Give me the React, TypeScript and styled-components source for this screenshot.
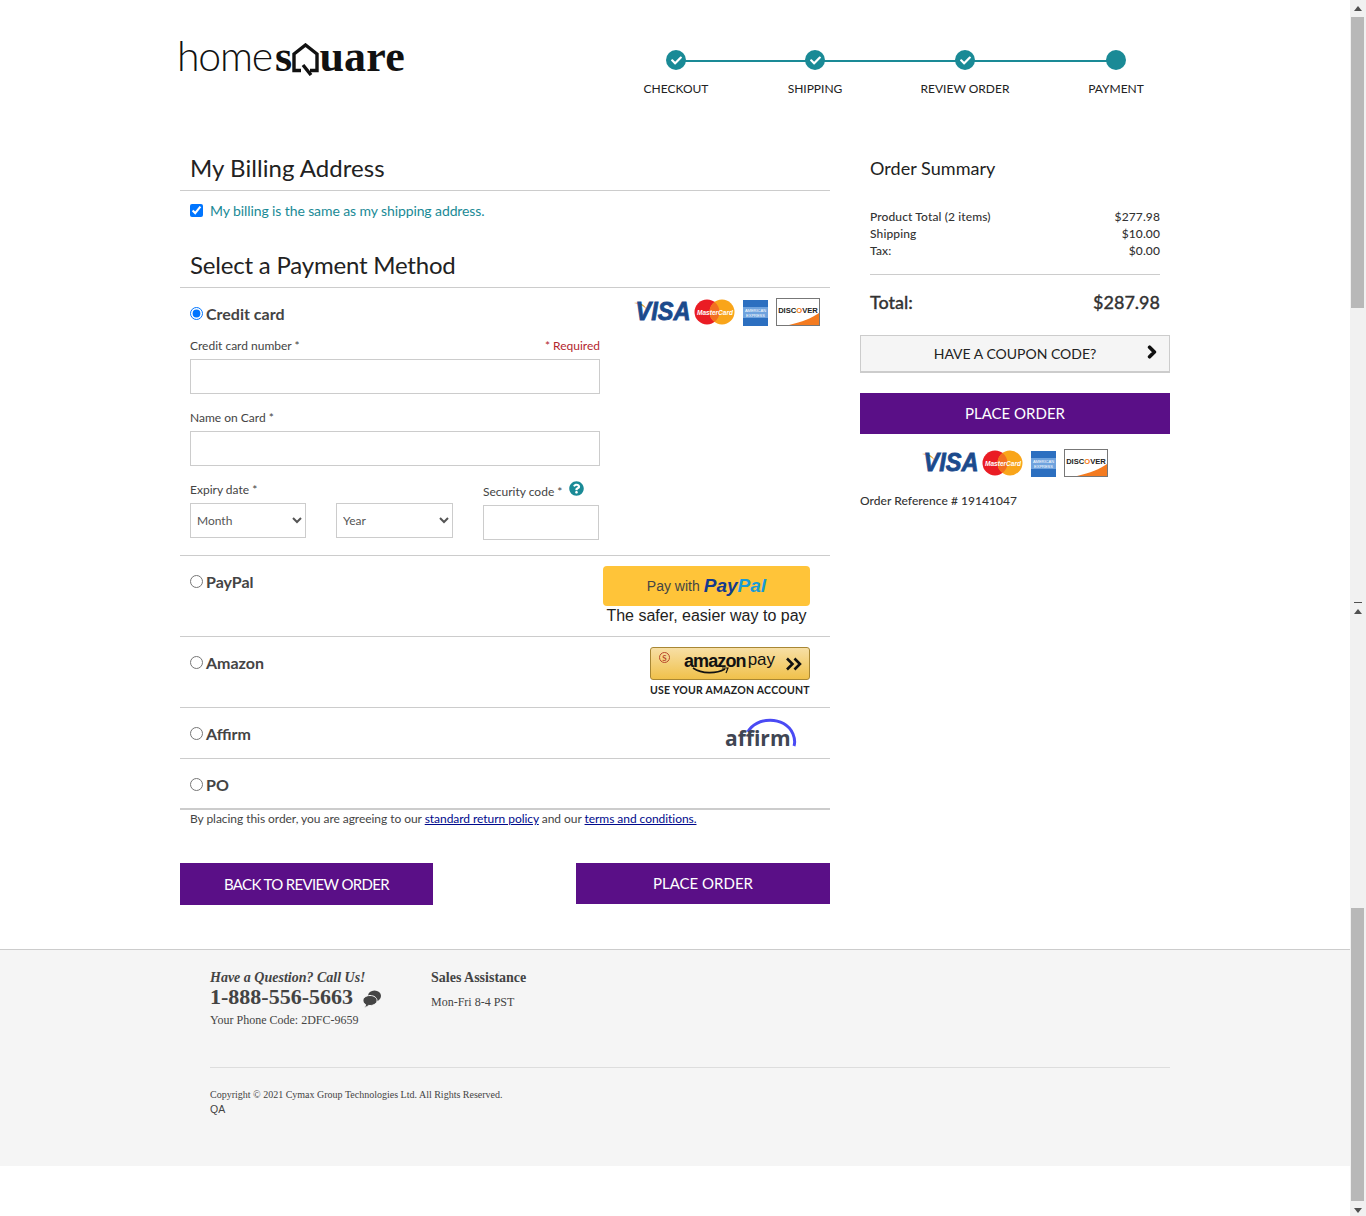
import * as React from "react";
import styled, {createGlobalStyle} from "styled-components";
import {FaCheck, FaChevronRight, FaQuestionCircle} from "react-icons/fa";

const GlobalStyle = createGlobalStyle`
    html, body {
        margin: 0;
        height: 1216px;
        overflow: hidden;
        background: #fff;
    }
    body {
        font-family: Lato, "Liberation Sans", sans-serif;
        color: #333;
    }
    * {
        box-sizing: border-box;
    }
`;

const STEPS = [
    {label: "CHECKOUT", gap: 0, done: true},
    {label: "SHIPPING", gap: 39, done: true},
    {label: "REVIEW ORDER", gap: 50, done: true},
    {label: "PAYMENT", gap: 51, done: false},
];

const CardLogos = () => (
    <svg width="186" height="30" viewBox="0 0 186 30" aria-label="Accepted cards">
        <path d="M0 5 C4 4 10 5 13 12 C11 9 6 6 0 5Z" fill="#e8a33a" />
        <text x="1.5" y="22" fontFamily="Liberation Sans" fontWeight="700" fontStyle="italic" fontSize="25" fill="#1b4a8c" stroke="#1b4a8c" strokeWidth="0.8" textLength="55" lengthAdjust="spacingAndGlyphs">VISA</text>
        <circle cx="73" cy="14" r="12.5" fill="#ea1c24" />
        <circle cx="88" cy="14" r="12.5" fill="#f9a51a" />
        <path d="M80.5 4 a12.5 12.5 0 0 1 0 20 a12.5 12.5 0 0 1 0 -20Z" fill="#f26f21" />
        <text x="63" y="16.5" fontFamily="Liberation Sans" fontWeight="700" fontStyle="italic" fontSize="7.5" fill="#fff" textLength="36" lengthAdjust="spacingAndGlyphs">MasterCard</text>
        <rect x="109" y="2" width="25" height="26" fill="#2c6fc0" />
        <rect x="109" y="9" width="25" height="11" fill="#6fa3de" />
        <text x="121.5" y="13.5" textAnchor="middle" fontFamily="Liberation Sans" fontSize="4" fill="#fff">AMERICAN</text>
        <text x="121.5" y="19" textAnchor="middle" fontFamily="Liberation Sans" fontSize="4" fill="#fff">EXPRESS</text>
        <rect x="142.5" y="0.5" width="43" height="27" fill="#fff" stroke="#777" />
        <path d="M155 27 C168 24 178 20 185 15 V27Z" fill="#f47b20" />
        <text x="164" y="15" textAnchor="middle" fontFamily="Liberation Sans" fontWeight="700" fontSize="7.6" fill="#222">DISC<tspan fill="#f47b20">O</tspan>VER</text>
    </svg>
);

const AffirmLogo = () => (
    <AffirmWrap>
        <AffirmArc width="52" height="30" viewBox="0 0 52 30">
            <path d="M3 14 C10 -1 40 -3 48 16 C50 21 50 25 49 28" fill="none" stroke="#4a4af4" strokeWidth="3" />
        </AffirmArc>
        <AffirmText>affirm</AffirmText>
    </AffirmWrap>
);

const ChatIcon = () => (
    <ChatSvg width="18" height="18" viewBox="0 0 18 18">
        <ellipse cx="11.5" cy="6" rx="6.5" ry="5.5" fill="#444" />
        <path d="M7 5.5 C3 5.5 0 7.7 0 10.5 C0 12.2 1 13.6 2.6 14.5 C2.5 15.6 2 16.5 1.4 17.3 C3 17.2 4.5 16.5 5.5 15.4 C6 15.5 6.5 15.5 7 15.5 C11 15.5 14 13.3 14 10.5 C14 7.7 11 5.5 7 5.5Z" fill="#444" stroke="#f5f5f5" strokeWidth="1" />
    </ChatSvg>
);

const ScrollArrow = ({down}: {down?: boolean}) => (
    <ArrowBox>
        <svg width="8" height="5" viewBox="0 0 8 5">
            <path d={down ? "M0 0H8L4 5Z" : "M0 5H8L4 0Z"} fill="#505050" />
        </svg>
    </ArrowBox>
);

export default function App() {
    return (
        <Shell>
            <GlobalStyle />
            <Page>
                <Wrap>
                    <Header>
                        <Logo>
                            <LogoThin>home</LogoThin>
                            <LogoBold>s</LogoBold>
                            <LogoHouse width="27" height="33" viewBox="0 0 27 33">
                                <path d="M9 27.5 H2 V11 L13.5 2 L25 11 V27.5 H18 M11 22 L19 32" fill="none" stroke="#111" strokeWidth="3.4" />
                            </LogoHouse>
                            <LogoBold>uare</LogoBold>
                        </Logo>
                        <Stepper>
                            <StepTrack />
                            {STEPS.map((step) => (
                                <Step key={step.label} $gap={step.gap}>
                                    <StepDot>{step.done && <FaCheck size={11} />}</StepDot>
                                    <StepLabel>{step.label}</StepLabel>
                                </Step>
                            ))}
                        </Stepper>
                    </Header>
                    <Columns>
                        <Main>
                            <SectionTitle>My Billing Address</SectionTitle>
                            <SameRow>
                                <Check type="checkbox" defaultChecked />
                                My billing is the same as my shipping address.
                            </SameRow>
                            <SectionTitle $second>Select a Payment Method</SectionTitle>
                            <CardRow>
                                <CardHead>
                                    <MethodLabel $top={-1}>
                                        <Radio type="radio" name="method" defaultChecked />
                                        Credit card
                                    </MethodLabel>
                                    <CardLogosSlot>
                                        <CardLogos />
                                    </CardLogosSlot>
                                </CardHead>
                                <FormColumn>
                                    <LabelRow>
                                        <FieldLabel>Credit card number *</FieldLabel>
                                        <Required>* Required</Required>
                                    </LabelRow>
                                    <TextField type="text" />
                                    <LabelRow $top={15}>
                                        <FieldLabel>Name on Card *</FieldLabel>
                                    </LabelRow>
                                    <TextField type="text" />
                                    <ExpiryRow>
                                        <ExpiryCol>
                                            <LabelRow>
                                                <FieldLabel>Expiry date *</FieldLabel>
                                            </LabelRow>
                                            <SelectPair>
                                                <DateSelect defaultValue="Month">
                                                    <option>Month</option>
                                                </DateSelect>
                                                <DateSelect defaultValue="Year">
                                                    <option>Year</option>
                                                </DateSelect>
                                            </SelectPair>
                                        </ExpiryCol>
                                        <SecurityCol>
                                            <SecurityLabel>
                                                <FieldLabel>Security code *</FieldLabel>
                                                <HelpIcon />
                                            </SecurityLabel>
                                            <TextField type="text" />
                                        </SecurityCol>
                                    </ExpiryRow>
                                </FormColumn>
                            </CardRow>
                            <MethodRow $height={81}>
                                <MethodLabel $top={9}>
                                    <Radio type="radio" name="method" />
                                    PayPal
                                </MethodLabel>
                                <PayPalBox>
                                    <PayPalButton>
                                        Pay with <PayPalMark>Pay<PayPalAccent>Pal</PayPalAccent></PayPalMark>
                                    </PayPalButton>
                                    <PayPalNote>The safer, easier way to pay</PayPalNote>
                                </PayPalBox>
                            </MethodRow>
                            <MethodRow $height={71}>
                                <MethodLabel $top={9}>
                                    <Radio type="radio" name="method" />
                                    Amazon
                                </MethodLabel>
                                <AmazonBox>
                                    <AmazonButton>
                                        <AmazonSeal>S</AmazonSeal>
                                        <AmazonWord>
                                            <strong>amazon</strong>
                                            <AmazonSmile width="38" height="7" viewBox="0 0 38 7">
                                                <path d="M1 1 C10 7 24 7 33 2" fill="none" stroke="#111" strokeWidth="1.6" />
                                                <path d="M30 1 H36 L34 6" fill="none" stroke="#111" strokeWidth="1.2" />
                                            </AmazonSmile>
                                        </AmazonWord>
                                        <AmazonPay>pay</AmazonPay>
                                        <svg width="16" height="14" viewBox="0 0 16 14">
                                            <path d="M1 1.5 L6.5 7 L1 12.5 M8.5 1.5 L14 7 L8.5 12.5" fill="none" stroke="#111" strokeWidth="2.6" />
                                        </svg>
                                    </AmazonButton>
                                    <AmazonNote>USE YOUR AMAZON ACCOUNT</AmazonNote>
                                </AmazonBox>
                            </MethodRow>
                            <MethodRow $height={51}>
                                <MethodLabel $top={9}>
                                    <Radio type="radio" name="method" />
                                    Affirm
                                </MethodLabel>
                                <AffirmLogo />
                            </MethodRow>
                            <MethodRow $height={50}>
                                <MethodLabel $top={9}>
                                    <Radio type="radio" name="method" />
                                    PO
                                </MethodLabel>
                            </MethodRow>
                            <Terms>
                                By placing this order, you are agreeing to our <TermsLink href="#return">standard return policy</TermsLink> and our <TermsLink href="#terms">terms and conditions.</TermsLink>
                            </Terms>
                            <ActionRow>
                                <PurpleButton $width={253} $height={42} $spacing={-0.65}>BACK TO REVIEW ORDER</PurpleButton>
                                <PurpleButton $width={254} $height={41}>PLACE ORDER</PurpleButton>
                            </ActionRow>
                        </Main>
                        <Side>
                            <SummaryTitle>Order Summary</SummaryTitle>
                            <SummaryLines>
                                <SummaryLine><span>Product Total (2 items)</span><span>$277.98</span></SummaryLine>
                                <SummaryLine><span>Shipping</span><span>$10.00</span></SummaryLine>
                                <SummaryLine><span>Tax:</span><span>$0.00</span></SummaryLine>
                            </SummaryLines>
                            <TotalRow><span>Total:</span><span>$287.98</span></TotalRow>
                            <CouponBox>
                                HAVE A COUPON CODE?
                                <CouponArrow><FaChevronRight size={14} stroke="currentColor" strokeWidth={50} /></CouponArrow>
                            </CouponBox>
                            <PurpleButton $height={41}>PLACE ORDER</PurpleButton>
                            <SideLogos>
                                <CardLogos />
                            </SideLogos>
                            <OrderRef>Order Reference # 19141047</OrderRef>
                        </Side>
                    </Columns>
                </Wrap>
                <Footer>
                    <FooterInner>
                        <FooterTop>
                            <CallBlock>
                                <CallLead>Have a Question? Call Us!</CallLead>
                                <PhoneLine>
                                    1-888-556-5663
                                    <ChatIcon />
                                </PhoneLine>
                                <PhoneCode>Your Phone Code: 2DFC-9659</PhoneCode>
                            </CallBlock>
                            <SalesBlock>
                                <SalesTitle>Sales Assistance</SalesTitle>
                                <SalesHours>Mon-Fri 8-4 PST</SalesHours>
                            </SalesBlock>
                        </FooterTop>
                        <Copyright>Copyright © 2021 Cymax Group Technologies Ltd. All Rights Reserved.</Copyright>
                        <Env>QA</Env>
                    </FooterInner>
                </Footer>
            </Page>
            <ScrollBar>
                <ScrollArrow />
                <Thumb $height={291} />
                <ScrollSpacer $height={294} />
                <ScrollMinus />
                <ScrollArrow />
                <ScrollSpacer $height={288} />
                <Thumb $height={293} />
                <ScrollSpacer $height={1} />
                <ScrollArrow down />
            </ScrollBar>
        </Shell>
    );
}

const Shell = styled.div`
    display: flex;
    width: 1366px;
    height: 1216px;
    overflow: hidden;
`;

const Page = styled.div`
    width: 1350px;
    flex: none;
`;

const Wrap = styled.div`
    width: 990px;
    height: 949px;
    margin-left: 180px;
`;

const Header = styled.header`
    display: flex;
    height: 155px;
`;

const Logo = styled.div`
    display: flex;
    align-items: baseline;
    width: 446px;
    height: 80px;
    padding-top: 31px;
    color: #111;
`;

const LogoThin = styled.span`
    font-family: Lato, sans-serif;
    font-weight: 300;
    font-size: 41px;
    line-height: 50px;
    letter-spacing: -1.2px;
    margin: 0 3px 0 -3px;
`;

const LogoBold = styled.span`
    font-family: "Liberation Serif", serif;
    font-weight: 700;
    font-size: 44px;
    line-height: 50px;
    letter-spacing: 0.25px;
`;

const LogoHouse = styled.svg`
    align-self: flex-start;
    margin-top: 12px;
    flex: none;
`;

const Stepper = styled.div`
    position: relative;
    display: flex;
    align-items: flex-start;
    height: 100px;
    padding-top: 50px;
`;

const StepTrack = styled.div`
    position: absolute;
    left: 50px;
    top: 60px;
    width: 440px;
    height: 2px;
    background: #1a8a96;
`;

const Step = styled.div<{$gap: number}>`
    position: relative;
    display: flex;
    flex-direction: column;
    align-items: center;
    width: 100px;
    margin-left: ${(p) => p.$gap}px;
`;

const StepDot = styled.div`
    display: flex;
    align-items: center;
    justify-content: center;
    width: 20px;
    height: 20px;
    border-radius: 50%;
    background: #1a8a96;
    color: #fff;
`;

const StepLabel = styled.div`
    margin-top: 12px;
    font-size: 12px;
    line-height: 14px;
    color: #222;
    white-space: nowrap;
`;

const Columns = styled.div`
    display: flex;
    gap: 30px;
`;

const Main = styled.main`
    width: 650px;
`;

const SectionTitle = styled.h2<{$second?: boolean}>`
    margin: ${(p) => (p.$second ? "21px" : "0")} 0 0;
    height: 36px;
    padding: 0 10px;
    border-bottom: 1px solid #ccc;
    font-size: 24px;
    font-weight: 400;
    line-height: 25px;
    letter-spacing: ${(p) => (p.$second ? "-0.2px" : "0.05px")};
    color: #222;
`;

const SameRow = styled.label`
    display: flex;
    align-items: center;
    height: 40px;
    padding: 0 10px 1px;
    font-size: 14px;
    letter-spacing: -0.1px;
    color: #1a8a96;
`;

const Check = styled.input`
    margin: 0 7px 0 0;
    width: 13px;
    height: 13px;
`;

const CardRow = styled.section`
    height: 268px;
    border-bottom: 1px solid #ccc;
    padding: 0 10px;
`;

const CardHead = styled.div`
    display: flex;
    justify-content: space-between;
    height: 49px;
    padding-top: 10px;
`;

const CardLogosSlot = styled.div`
    height: 30px;
`;

const MethodLabel = styled.label<{$top?: number}>`
    display: flex;
    align-items: center;
    height: 32px;
    margin-top: ${(p) => p.$top ?? 0}px;
    font-size: 16px;
    font-weight: 700;
    color: #444;
`;

const Radio = styled.input`
    margin: 0 3px 0 0;
    width: 13px;
    height: 13px;
`;

const FormColumn = styled.div`
    width: 410px;
`;

const LabelRow = styled.div<{$top?: number}>`
    display: flex;
    justify-content: space-between;
    align-items: center;
    height: 17px;
    margin-top: ${(p) => p.$top ?? 0}px;
    margin-bottom: 5px;
`;

const FieldLabel = styled.span`
    font-size: 12px;
    color: #444;
    white-space: nowrap;
`;

const Required = styled.span`
    font-size: 12px;
    color: #b3262e;
`;

const TextField = styled.input`
    display: block;
    width: 100%;
    height: 35px;
    border: 1px solid #ccc;
    background: #fff;
    padding: 0 6px;
    outline: none;
`;

const ExpiryRow = styled.div`
    display: flex;
    gap: 30px;
    margin-top: 15px;
`;

const ExpiryCol = styled.div`
    width: 263px;
`;

const SelectPair = styled.div`
    display: grid;
    grid-template-columns: 116px 117px;
    gap: 30px;
`;

const DateSelect = styled.select`
    width: 100%;
    height: 35px;
    border: 1px solid #ccc;
    border-radius: 0;
    background: #fff;
    padding: 0 2px;
    font-family: Lato, sans-serif;
    font-size: 12px;
    color: #555;
`;

const SecurityCol = styled.div`
    width: 116px;
    margin-top: -3px;
`;

const SecurityLabel = styled.div`
    display: flex;
    align-items: center;
    gap: 7px;
    height: 23px;
    padding-top: 4px;
    margin-bottom: 4px;
`;

const HelpIcon = styled(FaQuestionCircle)`
    width: 15px;
    height: 15px;
    flex: none;
    color: #1a8a96;
    margin-top: -7px;
`;

const MethodRow = styled.section<{$height: number}>`
    display: flex;
    justify-content: space-between;
    align-items: flex-start;
    height: ${(p) => p.$height}px;
    padding: 0 20px 0 10px;
    border-bottom: 1px solid #ccc;
`;

const PayPalBox = styled.div`
    width: 207px;
    padding-top: 10px;
`;

const PayPalButton = styled.div`
    display: flex;
    align-items: center;
    justify-content: center;
    gap: 4px;
    height: 40px;
    border-radius: 4px;
    background: #ffc439;
    font-family: "Liberation Sans", sans-serif;
    font-size: 14px;
    color: #444;
`;

const PayPalMark = styled.span`
    font-family: "Liberation Sans", sans-serif;
    font-weight: 700;
    font-style: italic;
    font-size: 19px;
    color: #143a8c;
`;

const PayPalAccent = styled.span`
    color: #179bd7;
`;

const PayPalNote = styled.div`
    font-family: "Liberation Sans", sans-serif;
    font-size: 16px;
    line-height: 20px;
    text-align: center;
    color: #222;
`;

const AmazonBox = styled.div`
    width: 160px;
    padding-top: 10px;
`;

const AmazonButton = styled.div`
    position: relative;
    display: flex;
    align-items: center;
    height: 33px;
    padding: 0 7px 0 33px;
    border: 1px solid #a88734;
    border-radius: 3px;
    background: linear-gradient(#f7dfa5, #f0c14b);
    color: #111;
`;

const AmazonSeal = styled.span`
    position: absolute;
    left: 8px;
    top: 4px;
    display: flex;
    align-items: center;
    justify-content: center;
    width: 11px;
    height: 11px;
    border: 1px solid #b8492c;
    border-radius: 50%;
    font-size: 8px;
    font-weight: 700;
    color: #b8492c;
`;

const AmazonWord = styled.span`
    position: relative;
    font-family: "Liberation Sans", sans-serif;
    font-size: 18px;
    line-height: 18px;
    letter-spacing: -0.9px;
    margin-top: -6px;
`;

const AmazonSmile = styled.svg`
    position: absolute;
    left: 8px;
    top: 15px;
`;

const AmazonPay = styled.span`
    font-family: "Liberation Sans", sans-serif;
    font-size: 17px;
    margin: -7px 11px 0 2px;
`;

const AmazonNote = styled.div`
    margin-top: 3px;
    font-size: 10.5px;
    line-height: 14px;
    font-weight: 700;
    letter-spacing: 0.25px;
    color: #222;
    white-space: nowrap;
`;

const AffirmWrap = styled.div`
    position: relative;
    width: 85px;
    height: 50px;
    flex: none;
`;

const AffirmArc = styled.svg`
    position: absolute;
    left: 20px;
    top: 10px;
`;

const AffirmText = styled.span`
    position: absolute;
    left: 0;
    top: 16px;
    font-family: "Open Sans", sans-serif;
    font-weight: 700;
    font-size: 21px;
    line-height: 28px;
    color: #3f4653;
`;

const Terms = styled.p`
    margin: 0;
    height: 54px;
    padding: 1px 10px 0;
    border-top: 1px solid #ccc;
    font-size: 12px;
    line-height: 16px;
    letter-spacing: -0.05px;
    color: #444;
`;

const TermsLink = styled.a`
    color: #000a8c;
    text-decoration: underline;
`;

const ActionRow = styled.div`
    display: flex;
    justify-content: space-between;
    align-items: flex-start;
`;

const PurpleButton = styled.button<{$width?: number; $height: number; $spacing?: number}>`
    display: block;
    width: ${(p) => (p.$width ? `${p.$width}px` : "100%")};
    height: ${(p) => p.$height}px;
    border: 0;
    padding: 0 0 1px;
    background: #5a0f87;
    color: #fff;
    font-family: Lato, sans-serif;
    font-size: 15px;
    letter-spacing: ${(p) => p.$spacing ?? 0}px;
`;

const Side = styled.aside`
    width: 310px;
`;

const SummaryTitle = styled.h3`
    margin: 0;
    height: 53px;
    padding: 1px 10px 0;
    font-size: 18px;
    font-weight: 400;
    line-height: 24px;
    letter-spacing: 0.05px;
    color: #222;
`;

const SummaryLines = styled.div`
    margin: 0 10px;
    height: 67px;
    border-bottom: 1px solid #ccc;
`;

const SummaryLine = styled.div`
    display: flex;
    justify-content: space-between;
    height: 17px;
    font-size: 12px;
    line-height: 17px;
    font-weight: 500;
    letter-spacing: 0.12px;
    color: #333;
`;

const TotalRow = styled.div`
    display: flex;
    justify-content: space-between;
    align-items: center;
    height: 60px;
    padding: 0 10px 6px;
    font-size: 18px;
    font-weight: 500;
    -webkit-text-stroke: 0.3px #333;
    color: #333;
`;

const CouponBox = styled.div`
    position: relative;
    display: flex;
    align-items: center;
    justify-content: center;
    height: 38px;
    margin-bottom: 20px;
    border: 1px solid #ccc;
    border-bottom-width: 2px;
    background: #f5f5f5;
    font-size: 14px;
    color: #222;
`;

const CouponArrow = styled.span`
    position: absolute;
    right: 10px;
    top: 9px;
    color: #111;
`;

const SideLogos = styled.div`
    display: flex;
    justify-content: center;
    height: 30px;
    margin-top: 15px;
`;

const OrderRef = styled.div`
    margin-top: 14px;
    font-size: 12px;
    font-weight: 500;
    letter-spacing: 0.05px;
    color: #333;
`;

const Footer = styled.footer`
    height: 217px;
    border-top: 1px solid #ccc;
    background: #f5f5f5;
    color: #444;
    font-family: "Liberation Serif", serif;
`;

const FooterInner = styled.div`
    width: 960px;
    margin-left: 210px;
    padding-top: 20px;
`;

const FooterTop = styled.div`
    display: flex;
    height: 98px;
    border-bottom: 1px solid #ddd;
`;

const CallBlock = styled.div`
    width: 221px;
`;

const CallLead = styled.div`
    font-size: 14px;
    font-weight: 700;
    font-style: italic;
    line-height: 16px;
`;

const PhoneLine = styled.div`
    display: flex;
    align-items: center;
    gap: 10px;
    font-size: 22px;
    font-weight: 700;
    line-height: 22px;
`;

const ChatSvg = styled.svg`
    flex: none;
    margin-top: 3px;
`;

const PhoneCode = styled.div`
    margin-top: 4px;
    font-size: 12px;
    line-height: 16px;
`;

const SalesBlock = styled.div`
    flex: 1;
`;

const SalesTitle = styled.div`
    font-size: 14px;
    font-weight: 700;
    line-height: 16px;
`;

const SalesHours = styled.div`
    margin-top: 8px;
    font-size: 12px;
    line-height: 16px;
`;

const Copyright = styled.div`
    margin-top: 20px;
    font-size: 10px;
    line-height: 14px;
`;

const Env = styled.div`
    font-family: "Liberation Sans", sans-serif;
    font-size: 10.5px;
    line-height: 14px;
`;

const ScrollBar = styled.div`
    display: flex;
    flex-direction: column;
    align-items: center;
    width: 16px;
    height: 1216px;
    flex: none;
    background: #f1f1f1;
`;

const ArrowBox = styled.div`
    display: flex;
    align-items: center;
    justify-content: center;
    width: 100%;
    height: 17px;
    flex: none;
`;

const Thumb = styled.div<{$height: number}>`
    width: 13px;
    height: ${(p) => p.$height}px;
    flex: none;
    margin-right: 1px;
    background: #b8b8b8;
`;

const ScrollSpacer = styled.div<{$height: number}>`
    height: ${(p) => p.$height}px;
    flex: none;
`;

const ScrollMinus = styled.div`
    width: 8px;
    height: 1px;
    flex: none;
    background: #505050;
`;
